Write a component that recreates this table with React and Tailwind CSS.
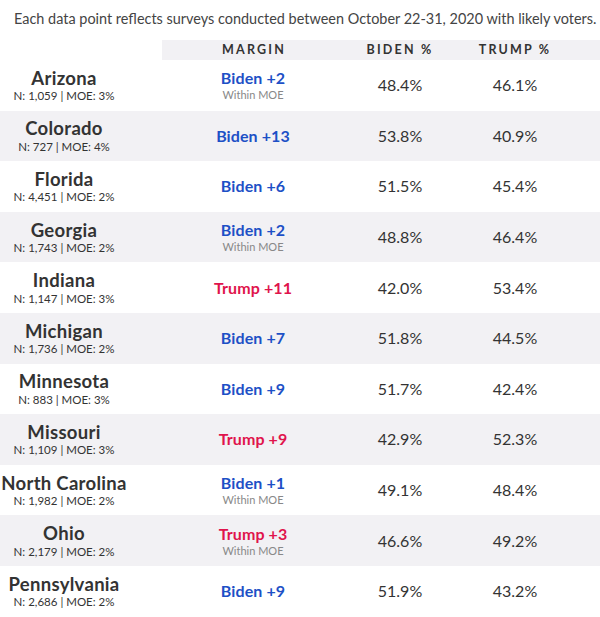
const rows = [
  { state: 'Arizona', sub: 'N: 1,059 | MOE: 3%', margin: 'Biden +2', party: 'b', moe: true, biden: '48.4%', trump: '46.1%' },
  { state: 'Colorado', sub: 'N: 727 | MOE: 4%', margin: 'Biden +13', party: 'b', biden: '53.8%', trump: '40.9%' },
  { state: 'Florida', sub: 'N: 4,451 | MOE: 2%', margin: 'Biden +6', party: 'b', biden: '51.5%', trump: '45.4%' },
  { state: 'Georgia', sub: 'N: 1,743 | MOE: 2%', margin: 'Biden +2', party: 'b', moe: true, biden: '48.8%', trump: '46.4%' },
  { state: 'Indiana', sub: 'N: 1,147 | MOE: 3%', margin: 'Trump +11', party: 't', biden: '42.0%', trump: '53.4%' },
  { state: 'Michigan', sub: 'N: 1,736 | MOE: 2%', margin: 'Biden +7', party: 'b', biden: '51.8%', trump: '44.5%' },
  { state: 'Minnesota', sub: 'N: 883 | MOE: 3%', margin: 'Biden +9', party: 'b', biden: '51.7%', trump: '42.4%' },
  { state: 'Missouri', sub: 'N: 1,109 | MOE: 3%', margin: 'Trump +9', party: 't', biden: '42.9%', trump: '52.3%' },
  { state: 'North Carolina', sub: 'N: 1,982 | MOE: 2%', margin: 'Biden +1', party: 'b', moe: true, biden: '49.1%', trump: '48.4%' },
  { state: 'Ohio', sub: 'N: 2,179 | MOE: 2%', margin: 'Trump +3', party: 't', moe: true, biden: '46.6%', trump: '49.2%' },
  { state: 'Pennsylvania', sub: 'N: 2,686 | MOE: 2%', margin: 'Biden +9', party: 'b', biden: '51.9%', trump: '43.2%' },
]

function Row({ r, i }) {
  return (
    <div className={`flex items-center h-[50.6px] ${i % 2 ? 'bg-[#f2f1f4]' : 'bg-white'}`}>
      <div className="w-[128px] flex flex-col items-center leading-none whitespace-nowrap">
        <div className="text-[18.5px] font-bold text-[#333] tracking-[0.3px]">{r.state}</div>
        <div className="text-[11.5px] text-[#333] mt-[3px]">{r.sub}</div>
      </div>
      <div className="ml-[32px] w-[186px] flex flex-col items-center leading-none whitespace-nowrap">
        <div className={`text-[16px] font-bold tracking-[0.1px] ${r.party === 'b' ? 'text-[#1d50c6]' : 'text-[#e0144c]'}`}>{r.margin}</div>
        {r.moe && <div className="text-[11px] text-[#888] mt-[3px]">Within MOE</div>}
      </div>
      <div className="w-[108px] text-center text-[16px] text-[#333]">{r.biden}</div>
      <div className="w-[122px] text-center text-[16px] text-[#333]">{r.trump}</div>
    </div>
  )
}

export default function App() {
  return (
    <div className="w-[600px] h-[617px] bg-white overflow-hidden font-['Lato',sans-serif]">
      <div className="h-[40px] pl-[14px] pt-[8px] text-[14.45px] text-[#444] whitespace-nowrap">
        Each data point reflects surveys conducted between October 22-31, 2020 with likely voters.
      </div>
      <div className="pl-[162px]">
        <div className="flex items-center h-[20px] bg-[#f2f1f4] text-[12.5px] font-bold tracking-[2.2px] text-[#333]">
          <div className="w-[184px] text-center">MARGIN</div>
          <div className="w-[108px] text-center">BIDEN %</div>
          <div className="w-[122px] text-center">TRUMP %</div>
        </div>
      </div>
      {rows.map((r, i) => <Row key={r.state} r={r} i={i} />)}
    </div>
  )
}
